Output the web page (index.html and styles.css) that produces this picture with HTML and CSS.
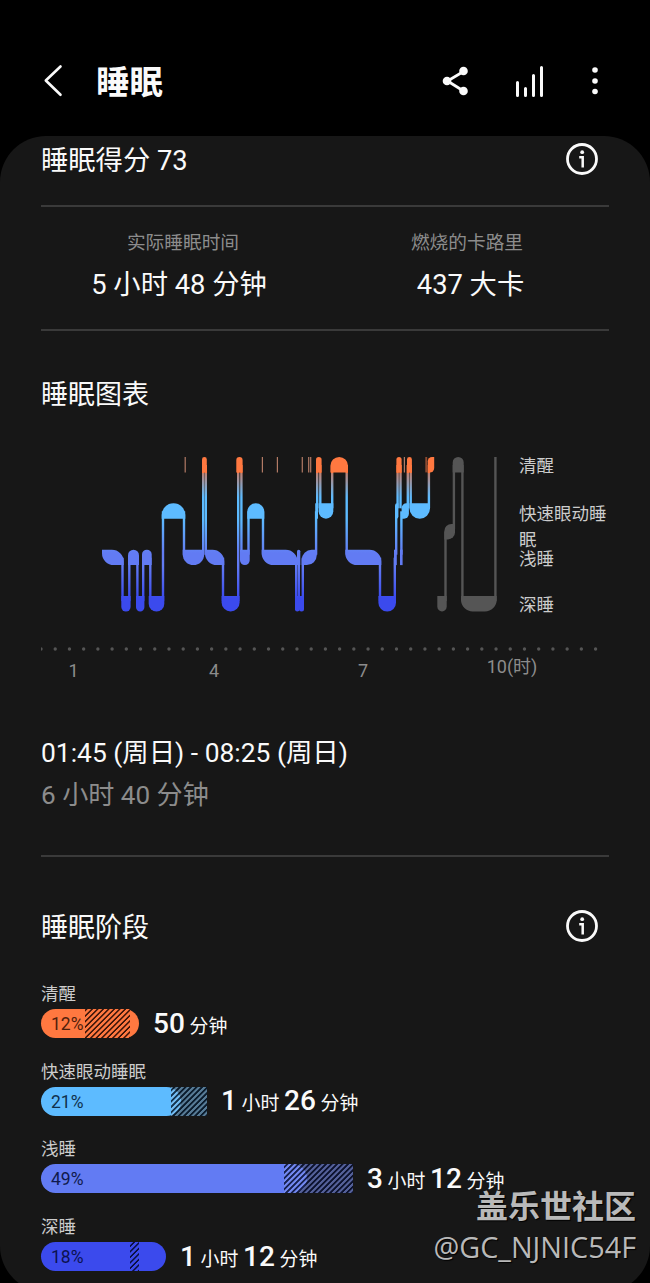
FILE: index.html
```
<!DOCTYPE html>
<html lang="zh-CN">
<head>
  <meta charset="UTF-8" />
  <meta name="viewport" content="width=device-width, initial-scale=1.0"/>
  <title>睡眠</title>
  <link rel="stylesheet" href="styles.css">
</head>
<body>

  <header>
    <svg class="back" width="24" height="36" viewBox="0 0 24 36"><path d="M18.500 3.500 L3.800 17.500 L18.500 31.800"/></svg>
    <h1>睡眠</h1>
    <div class="actions">
      <svg class="share" width="30" height="32" viewBox="0 0 30 32">
        <path d="M21.500 6.500 L5.500 16 L21.500 26"/>
        <circle cx="21.500" cy="6" r="4.300"/><circle cx="5" cy="16" r="4.300"/><circle cx="21.500" cy="26" r="4.300"/>
      </svg>
      <svg class="stats" width="30" height="34" viewBox="0 0 30 34">
        <path d="M2.500 18.500 V31.500 M10.500 24.500 V31.500 M18.500 11.500 V31.500 M26.500 3.500 V31.500"/>
      </svg>
      <svg class="more" width="8" height="32" viewBox="0 0 8 32">
        <circle cx="4" cy="5" r="2.800"/><circle cx="4" cy="16" r="2.800"/><circle cx="4" cy="26.500" r="2.800"/>
      </svg>
    </div>
  </header>

  <main>
    <section class="score">
      <h2>睡眠得分 73</h2>
      <svg class="info" width="34" height="34" viewBox="0 0 34 34">
        <circle cx="17" cy="17" r="14.500"/><path d="M14.200 15.200 H17.700 V25.500"/><circle class="dot" cx="17.200" cy="10.200" r="1.900"/>
      </svg>
    </section>

    <section class="totals">
      <div>
        <span>实际睡眠时间</span>
        <strong>5 小时 48 分钟</strong>
      </div>
      <div>
        <span>燃烧的卡路里</span>
        <strong>437 大卡</strong>
      </div>
    </section>

    <section class="chart">
      <h2>睡眠图表</h2>
      <div class="plot">
        <svg id="graph" width="478" height="160" viewBox="41 454 478 160">
          <defs>
            <linearGradient id="stages" gradientUnits="userSpaceOnUse" x1="0" y1="457" x2="0" y2="612">
              <stop offset="0.1" stop-color="#ff7840"/>
              <stop offset="0.1" stop-color="#c08070"/>
              <stop offset="0.26" stop-color="#5dbbff"/>
              <stop offset="0.4" stop-color="#5dbbff"/>
              <stop offset="0.62" stop-color="#627bf3"/>
              <stop offset="0.7" stop-color="#627bf3"/>
              <stop offset="0.91" stop-color="#3b4aed"/>
            </linearGradient>
          </defs>
        </svg>
        <div class="levels">
          <span>清醒</span>
          <span>快速眼动睡眠</span>
          <span>浅睡</span>
          <span>深睡</span>
        </div>
      </div>
      <svg class="dots" width="568" height="6"><path d="M0 3 H556"/></svg>
      <div class="hours"><span>1</span><span>4</span><span>7</span><span>10(时)</span></div>
      <p class="period">01:45 (周日) - 08:25 (周日)</p>
      <p class="length">6 小时 40 分钟</p>
    </section>

    <section class="stages">
      <div class="stages-title">
        <h2>睡眠阶段</h2>
        <svg class="info" width="34" height="34" viewBox="0 0 34 34">
          <circle cx="17" cy="17" r="14.500"/><path d="M14.200 15.200 H17.700 V25.500"/><circle class="dot" cx="17.200" cy="10.200" r="1.900"/>
        </svg>
      </div>

      <div class="stage awake">
        <label>清醒</label>
        <div class="row">
          <div class="bar"><div class="fill">12%</div><div class="range"></div></div>
          <p><b>50</b> 分钟</p>
        </div>
      </div>
      <div class="stage rem">
        <label>快速眼动睡眠</label>
        <div class="row">
          <div class="bar"><div class="fill">21%</div><div class="range"></div></div>
          <p><b>1</b> 小时 <b>26</b> 分钟</p>
        </div>
      </div>
      <div class="stage light">
        <label>浅睡</label>
        <div class="row">
          <div class="bar"><div class="fill">49%</div><div class="range"></div></div>
          <p><b>3</b> 小时 <b>12</b> 分钟</p>
        </div>
      </div>
      <div class="stage deep">
        <label>深睡</label>
        <div class="row">
          <div class="bar"><div class="fill">18%</div><div class="range"></div></div>
          <p><b>1</b> 小时 <b>12</b> 分钟</p>
        </div>
      </div>
    </section>
  </main>

  <div class="watermark">
    <b>盖乐世社区</b>
    <span>@GC_NJNIC54F</span>
  </div>

  <script>
    const graph = document.getElementById('graph');
    const H = 15.4;
    const AWAKE = 457, REM = 503.3, LIGHT = 549.7, DEEP = 596.1, NAP = 524;

    // corners that get rounded: top-left, top-right, bottom-right, bottom-left
    const CAP = [1, 1, 0, 0], CUP = [0, 0, 1, 1], FALL = [0, 1, 0, 1],
          RISE = [1, 0, 1, 0], BOX = [0, 0, 0, 0];

    const blocks = [
      [102, 123.7, LIGHT, FALL], [121.3, 130.6, DEEP, CUP], [128, 139, LIGHT, CAP],
      [136, 144.4, DEEP, CUP], [142, 151.7, LIGHT, CAP], [148.7, 164.3, DEEP, CUP],
      [161.7, 185.3, REM, CAP], [182.7, 204.2, LIGHT, CUP], [202, 206.8, AWAKE, CAP],
      [205, 224.3, LIGHT, FALL], [221.6, 239.6, DEEP, CUP], [236.3, 242.6, AWAKE, CAP],
      [240, 249.7, LIGHT, CUP], [247.3, 264.3, REM, CAP], [261.7, 297.5, LIGHT, FALL],
      [297, 300.3, LIGHT, CAP], [295, 299.5, DEEP, CUP], [299, 304, DEEP, CUP],
      [301.7, 316.8, LIGHT, RISE], [315.2, 318, REM, BOX], [316, 321.6, AWAKE, CAP],
      [318.6, 333.3, REM, CUP], [330.4, 348, AWAKE, CAP], [345.3, 381.3, LIGHT, FALL],
      [378.4, 396, DEEP, CUP], [394, 396.8, LIGHT, BOX], [395, 398.4, REM, RISE],
      [396.4, 401.6, AWAKE, CAP], [400, 402.6, LIGHT, BOX], [401.6, 408.9, REM, RISE],
      [407, 411.9, AWAKE, CAP], [409.5, 430, REM, CUP], [427.7, 434.2, AWAKE, RISE]
    ];
    const links = [
      [121.3, LIGHT, DEEP], [128.1, LIGHT, DEEP], [136.2, LIGHT, DEEP], [142, LIGHT, DEEP],
      [149.1, LIGHT, DEEP], [161.8, REM, DEEP], [182.8, REM, LIGHT], [202, AWAKE, LIGHT],
      [204.6, AWAKE, LIGHT], [221.8, LIGHT, DEEP], [237, AWAKE, DEEP], [240.2, AWAKE, LIGHT],
      [247.3, REM, LIGHT], [261.8, REM, LIGHT], [295, LIGHT, DEEP], [297.6, LIGHT, DEEP],
      [301.6, LIGHT, DEEP], [314.9, REM, LIGHT], [316, AWAKE, REM], [319.1, AWAKE, REM],
      [331, AWAKE, REM], [345.5, AWAKE, LIGHT], [378.8, LIGHT, DEEP], [393.6, LIGHT, DEEP],
      [395, REM, LIGHT], [396.4, AWAKE, REM], [399.3, AWAKE, REM], [400.2, REM, LIGHT],
      [406.6, AWAKE, REM], [409.5, AWAKE, REM], [427.7, AWAKE, REM]
    ];
    const napBlocks = [
      [437.3, 446.7, DEEP, CUP], [444.3, 455, NAP, RISE],
      [452.7, 463.7, AWAKE, CAP], [461, 496.7, DEEP, CUP]
    ];
    const napLinks = [
      [444.3, NAP, DEEP], [452.7, AWAKE, NAP], [461.2, AWAKE, DEEP], [494.2, AWAKE - 8, DEEP]
    ];
    const ticks = [185.2, 262.4, 277.4, 302.3, 308.7, 310.7, 404.4];

    function draw(d, fill) {
      const p = document.createElementNS('http://www.w3.org/2000/svg', 'path');
      p.setAttribute('d', d);
      p.setAttribute('fill', fill);
      graph.appendChild(p);
    }

    function block([x1, x2, y, c], fill) {
      const r = Math.min((x2 - x1) / (c === RISE || c === FALL ? 1.5 : 2), 11.8);
      const [a, b, e, f] = c.map(on => on * r);
      const y2 = y + H;
      draw(`M${x1 + a} ${y} H${x2 - b} A${b} ${b} 0 0 1 ${x2} ${y + b} V${y2 - e}
            A${e} ${e} 0 0 1 ${x2 - e} ${y2} H${x1 + f} A${f} ${f} 0 0 1 ${x1} ${y2 - f}
            V${y + a} A${a} ${a} 0 0 1 ${x1 + a} ${y} Z`, fill);
    }

    function link([x, from, to], fill) {
      draw(`M${x} ${from + 8} h2.400 V${to + 5} h-2.400 Z`, fill);
    }

    links.forEach(l => link(l, 'url(#stages)'));
    blocks.forEach(b => block(b, 'url(#stages)'));
    napLinks.forEach(l => link(l, '#555'));
    napBlocks.forEach(b => block(b, '#555'));
    ticks.forEach(x => draw(`M${x - 0.6} 457 h1.200 v15.400 h-1.200 Z`, '#b27a65'));
    draw('M425.300 457 h1.900 v15.400 h-1.900 Z', '#8c4a30');
  </script>
</body>
</html>
```
FILE: styles.css
```
* { box-sizing: border-box; }
html, body { margin: 0; padding: 0; height: 100%; overflow: hidden; }
body {
  position: relative;
  width: 650px; height: 1283px;
  display: flex; flex-direction: column;
  background: #000; color: #fafafa;
  font-family: Roboto, 'Noto Sans CJK SC', sans-serif;
}
h1, h2, p { margin: 0; font-weight: 400; }
svg { display: block; flex: none; }

header {
  flex: 0 0 136px;
  display: flex; align-items: center;
  padding: 26px 51px 0 42px;
}
header h1 {
  margin: 4px 0 0 30px;
  font-size: 33.5px; line-height: 40px; font-weight: 700;
}
.back path { fill: none; stroke: #fafafa; stroke-width: 2.6; stroke-linecap: round; stroke-linejoin: round; }
.actions { margin-left: auto; display: flex; align-items: center; }
.actions svg { fill: #fafafa; }
.share path { fill: none; stroke: #fafafa; stroke-width: 2.8; }
.stats { margin-left: 43px; }
.stats path { stroke: #fafafa; stroke-width: 3; stroke-linecap: round; }
.more { margin-left: 46px; }

main {
  flex: 0 0 1146px;
  padding: 0 41px;
  background: #171717;
  border-radius: 46px;
}
h2 { font-size: 27px; line-height: 36px; position: relative; top: 1px; }
.info { margin-top: -2px; fill: none; stroke: #fafafa; stroke-width: 2.8; }
.info path { stroke-width: 2.5; }
.info .dot { fill: #fafafa; stroke: none; }

.score {
  display: flex; justify-content: space-between; align-items: center;
  height: 71px; padding: 0 10px 22px 0;
  border-bottom: 2px solid #3a3a3a;
}
.score h2 { font-size: 27.3px; }
.totals {
  display: grid; grid-template-columns: 1fr 1fr;
  height: 124px; padding-top: 22px;
  border-bottom: 2px solid #3a3a3a;
  text-align: center;
}
.totals div { display: flex; flex-direction: column; }
.totals span { font-size: 18.7px; line-height: 28px; color: #8c8c8c; }
.totals strong { margin: 10px 8px 0 0; font-size: 27.3px; line-height: 36px; font-weight: 400; }
.totals div + div strong { margin-right: -7px; }

.chart { height: 526px; padding-top: 45px; border-bottom: 2px solid #3a3a3a; }
.plot { display: flex; height: 160px; margin-top: 42px; }
.levels { display: grid; grid-template-rows: 48px 45px 46px 20px; width: 90px; margin-top: -1px; }
.levels span { font-size: 17.5px; line-height: 26px; color: #ccc; }
.dots { margin-top: 32px; }
.dots path { stroke: #555; stroke-width: 3.4; stroke-linecap: round; stroke-dasharray: 0 14.22; }
.hours { display: grid; grid-template-columns: 65px 216px 82px 216px; height: 34px; margin-top: 8px; }
.hours span { font-size: 18px; line-height: 22px; color: #8c8c8c; text-align: center; }
.hours span:nth-child(4) { margin-top: -4px; }
.period { margin-top: 39px; font-size: 26.4px; line-height: 41px; }
.length { font-size: 26.1px; line-height: 42px; color: #8c8c8c; }

.stages { padding-top: 52px; }
.stages-title { display: flex; justify-content: space-between; align-items: center; padding-right: 10px; }
.stage { height: 77.7px; }
.stage:nth-child(2) { margin-top: 36px; }
.stage label { display: block; padding-top: 1px; font-size: 17.5px; line-height: 24px; color: #ccc; }
.row { display: flex; align-items: center; height: 29px; margin-top: 3px; }
.bar { position: relative; height: 29px; }
.fill {
  height: 29px; padding-left: 10px;
  border-radius: 15px;
  font-size: 17.5px; line-height: 30px;
}
/* typical range, hatched over the fill */
.range { position: absolute; top: 0; bottom: 0; }
.row p { margin-left: 14px; padding-top: 2px; font-size: 18.9px; line-height: 29px; white-space: nowrap; }
.row b { font-size: 28px; font-weight: 500; }

.awake .bar, .awake .fill { width: 98px; }
.awake .fill { background: #ff7840; color: #50200c; }
.awake .range {
  left: 44px; width: 45px;
  background: repeating-linear-gradient(-45deg, #3a1409 0 0.8px, #ff7840 1.5px 3.2px, #3a1409 3.9px);
}
.rem .bar { width: 166px; }
.rem .fill { width: 140px; background: #5dbbff; color: #10304c; }
.rem .range {
  left: 130px; width: 36px;
  background: repeating-linear-gradient(-45deg, rgba(8,28,48,.85) 0 1.2px, rgba(130,190,235,.6) 1.8px 3.2px, rgba(8,28,48,.85) 3.9px);
}
.light .bar { width: 312px; }
.light .fill { width: 266px; background: #627bf3; color: #101a4c; }
.light .range {
  left: 243px; width: 69px;
  background: repeating-linear-gradient(-45deg, rgba(10,17,50,.85) 0 1.2px, rgba(125,145,240,.6) 1.8px 3.2px, rgba(10,17,50,.85) 3.9px);
}
.deep .bar, .deep .fill { width: 125px; }
.deep .fill { background: #3b4aed; color: #0c1250; }
.deep .range {
  left: 89px; width: 9px;
  background: repeating-linear-gradient(-45deg, #0a0f40 0 0.8px, #3b4aed 1.5px 3.2px, #0a0f40 3.9px);
}

.watermark {
  position: absolute; right: 14px; bottom: 16px;
  display: flex; flex-direction: column; align-items: flex-end;
  color: #b9b9b9;
  text-shadow: 1px 1px 1px #000;
}
.watermark b { font-size: 32px; line-height: 40px; font-weight: 700; }
.watermark span { font-family: 'Open Sans', sans-serif; font-size: 28.8px; line-height: 40px; }
```
